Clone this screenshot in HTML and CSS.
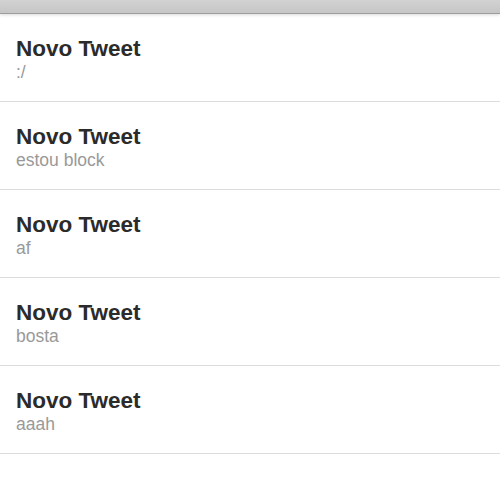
FILE: index.html
```html
<!DOCTYPE html>
<html lang="pt">
<head>
    <meta charset="UTF-8">
    <meta name="viewport" content="width=device-width, initial-scale=1.0">
    <title>Tweets</title>
    <link rel="stylesheet" href="styles.css">
</head>
<body>
    <div class="top-bar"></div>
    <ul class="tweet-list">
        <li class="tweet">
            <div class="tweet-title">Novo Tweet</div>
            <div class="tweet-text">:/</div>
        </li>
        <li class="tweet">
            <div class="tweet-title">Novo Tweet</div>
            <div class="tweet-text">estou block</div>
        </li>
        <li class="tweet">
            <div class="tweet-title">Novo Tweet</div>
            <div class="tweet-text">af</div>
        </li>
        <li class="tweet">
            <div class="tweet-title">Novo Tweet</div>
            <div class="tweet-text">bosta</div>
        </li>
        <li class="tweet">
            <div class="tweet-title">Novo Tweet</div>
            <div class="tweet-text">aaah</div>
        </li>
    </ul>
</body>
</html>
```

FILE: styles.css
```css
body {
    font-family: "Liberation Sans", Arial, sans-serif;
    margin: 0;
    background: #fff;
    height: 100vh;
    overflow: hidden;
}

.top-bar {
    height: 13px;
    background: linear-gradient(#d2d2d2, #c6c6c6);
    border-bottom: 1px solid #9d9d9d;
    box-shadow: 0 1px 3px rgba(0, 0, 0, 0.15);
    position: relative;
}

.tweet-list {
    list-style: none;
    margin: 0;
    padding: 0;
}

.tweet {
    height: 88px;
    box-sizing: border-box;
    padding: 22px 16px 19px;
    border-bottom: 1px solid #dcdcdc;
}

.tweet-title {
    font-size: 22.5px;
    line-height: 25px;
    font-weight: bold;
    color: #2b2b2b;
}

.tweet-text {
    font-size: 17.5px;
    line-height: 22px;
    color: #999;
}
```
